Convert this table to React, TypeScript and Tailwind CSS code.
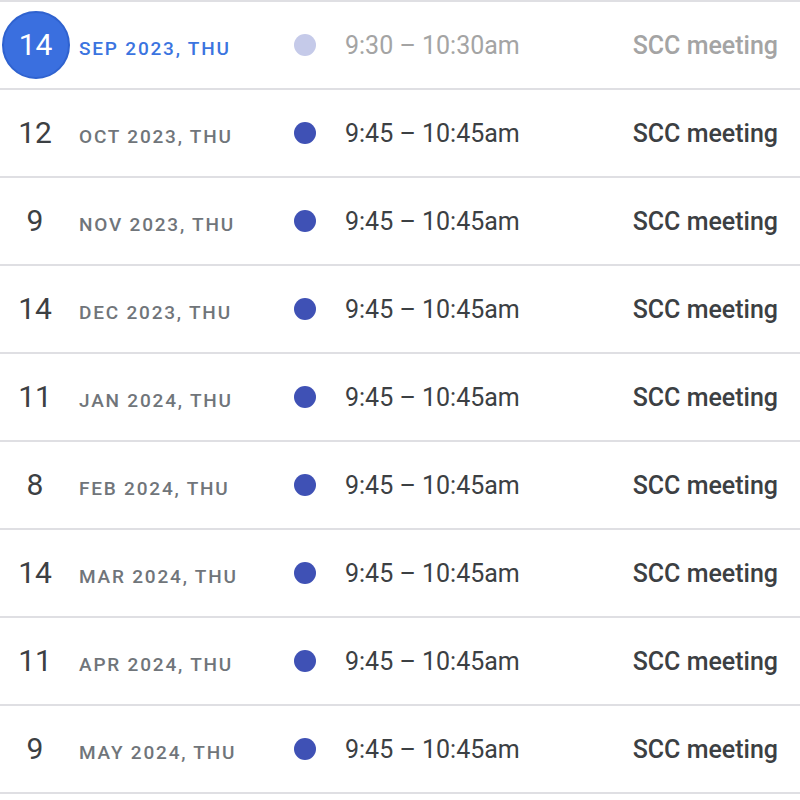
import React from "react";

type Row = { day: string; date: string; time: string; today?: boolean };

const rows: Row[] = [
  { day: "14", date: "SEP 2023, THU", time: "9:30 – 10:30am", today: true },
  { day: "12", date: "OCT 2023, THU", time: "9:45 – 10:45am" },
  { day: "9", date: "NOV 2023, THU", time: "9:45 – 10:45am" },
  { day: "14", date: "DEC 2023, THU", time: "9:45 – 10:45am" },
  { day: "11", date: "JAN 2024, THU", time: "9:45 – 10:45am" },
  { day: "8", date: "FEB 2024, THU", time: "9:45 – 10:45am" },
  { day: "14", date: "MAR 2024, THU", time: "9:45 – 10:45am" },
  { day: "11", date: "APR 2024, THU", time: "9:45 – 10:45am" },
  { day: "9", date: "MAY 2024, THU", time: "9:45 – 10:45am" },
];

export default function App() {
  return (
    <div
      className="w-[800px] h-[800px] bg-white overflow-hidden"
      style={{ fontFamily: "Roboto, 'Noto Sans', sans-serif" }}
    >
      <div className="border-t-2 border-[#dfdfe3]">
        {rows.map((r, i) => (
          <div
            key={i}
            className="flex items-center h-[88px] border-b-2 border-[#dfdfe3]"
          >
            <div className="w-[70px] flex justify-center items-center shrink-0">
              {r.today ? (
                <div className="w-[68px] h-[68px] ml-[1px] rounded-full bg-[#3a6fdf] border-2 border-[#2f62cf] flex items-center justify-center text-white text-[30px] leading-none">
                  14
                </div>
              ) : (
                <span className="text-[30px] leading-none text-[#3c4043] mt-[-1px]">
                  {r.day}
                </span>
              )}
            </div>
            <div
              className={`w-[224px] shrink-0 pl-[9px] pt-[7px] text-[19px] font-medium tracking-[1.8px] leading-none ${
                r.today ? "text-[#3b74e0]" : "text-[#70757a]"
              }`}
            >
              {r.date}
            </div>
            <div className="w-[22px] shrink-0 flex justify-center">
              <div
                className={`w-[22px] h-[22px] rounded-full ${
                  r.today ? "bg-[#c5cae9]" : "bg-[#3f51b5]"
                }`}
              />
            </div>
            <div
              className={`ml-[29px] flex-1 text-[25px] leading-none ${
                r.today ? "text-[#a4a4a4]" : "text-[#3c4043]"
              }`}
            >
              {r.time}
            </div>
            <div
              className={`pr-[22px] text-[25px] font-medium leading-none ${
                r.today ? "text-[#a4a4a4]" : "text-[#3c4043]"
              }`}
            >
              SCC meeting
            </div>
          </div>
        ))}
      </div>
    </div>
  );
}
